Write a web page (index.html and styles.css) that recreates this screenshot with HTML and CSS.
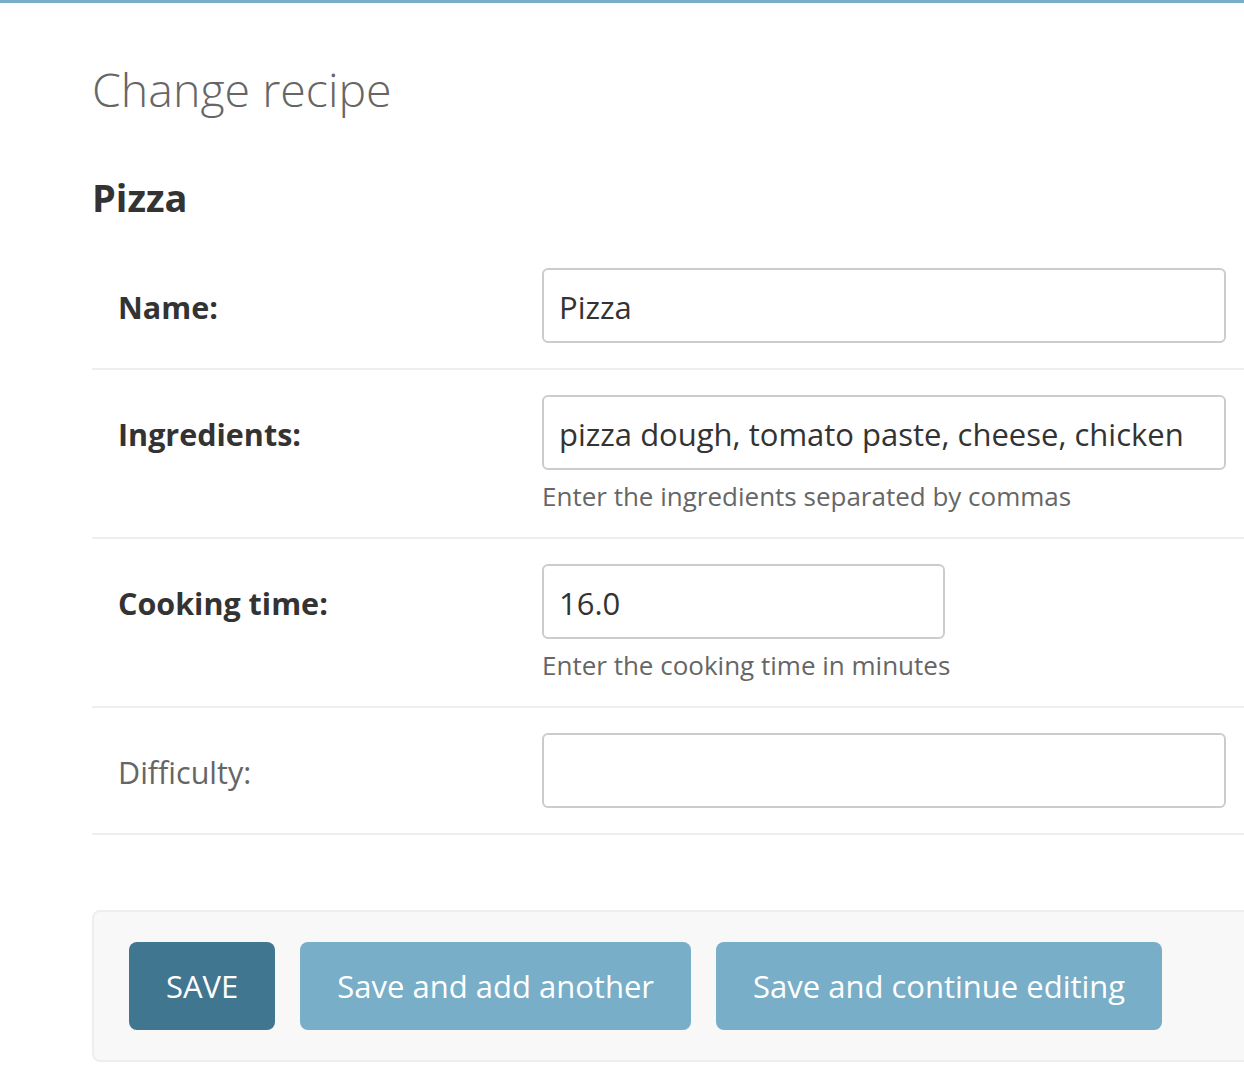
FILE: index.html
```html
<!DOCTYPE html>
<html lang="en">
<head>
<meta charset="utf-8">
<title>Change recipe</title>
<link rel="stylesheet" href="styles.css">
</head>
<body>
<div class="topbar"></div>
<main class="content">
  <h1 class="page-title">Change recipe</h1>
  <h2 class="object-title">Pizza</h2>
  <form class="change-form">
    <fieldset class="module">
      <div class="form-row">
        <label class="label required" for="id_name">Name:</label>
        <div class="field">
          <input class="text-input wide" id="id_name" type="text" value="Pizza">
        </div>
      </div>
      <div class="form-row">
        <label class="label required" for="id_ingredients">Ingredients:</label>
        <div class="field">
          <input class="text-input wide" id="id_ingredients" type="text" value="pizza dough, tomato paste, cheese, chicken">
          <div class="help">Enter the ingredients separated by commas</div>
        </div>
      </div>
      <div class="form-row">
        <label class="label required" for="id_cooking_time">Cooking time:</label>
        <div class="field">
          <input class="text-input narrow" id="id_cooking_time" type="text" value="16.0">
          <div class="help">Enter the cooking time in minutes</div>
        </div>
      </div>
      <div class="form-row">
        <label class="label optional" for="id_difficulty">Difficulty:</label>
        <div class="field">
          <input class="text-input wide" id="id_difficulty" type="text" value="">
        </div>
      </div>
    </fieldset>
    <div class="submit-row">
      <button type="button" class="btn btn-default">SAVE</button>
      <button type="button" class="btn">Save and add another</button>
      <button type="button" class="btn">Save and continue editing</button>
    </div>
  </form>
</main>
</body>
</html>
```
FILE: styles.css
```css
html, body {
  margin: 0;
  padding: 0;
  overflow: hidden;
  background: #fff;
}
body {
  font-family: "Open Sans", "Noto Sans", sans-serif;
  color: #333;
  width: 1244px;
  height: 1067px;
}
.topbar {
  height: 3px;
  background: #79aec8;
}
.content {
  padding: 59px 0 0 92px;
  width: 1300px;
}
.page-title {
  margin: 0 0 58px 0;
  font-size: 46.5px;
  line-height: 54px;
  font-weight: 300;
  color: #666;
}
.object-title {
  margin: 0 0 23px 0;
  font-size: 38px;
  line-height: 46px;
  font-weight: 700;
  color: #333;
}
.change-form {
  margin: 0;
}
.module {
  margin: 0;
  padding: 0;
  border: 0;
}
.form-row {
  display: flex;
  align-items: baseline;
  padding: 25px 0 25px 26px;
  border-bottom: 2px solid #eee;
}
.label {
  width: 424px;
  flex: none;
  font-size: 30.5px;
  line-height: 40px;
  color: #333;
}
.label.required {
  font-weight: 700;
}
.label.optional {
  font-weight: 400;
  color: #666;
}
.field {
  display: flex;
  flex-direction: column;
  align-items: flex-start;
}
.text-input {
  box-sizing: border-box;
  height: 75px;
  padding: 3px 15px 0;
  border: 2px solid #ccc;
  border-radius: 6px;
  font-family: "Open Sans", "Noto Sans", sans-serif;
  font-size: 31px;
  color: #333;
  background: #fff;
  outline: none;
}
.text-input.wide {
  width: 684px;
}
.text-input.narrow {
  width: 403px;
}
.help {
  margin-top: 10px;
  font-size: 26px;
  line-height: 32px;
  color: #666;
}
.submit-row {
  display: flex;
  gap: 25px;
  margin-top: 75px;
  padding: 30px 35px 30px;
  background: #f8f8f8;
  border: 2px solid #eee;
  border-radius: 8px;
}
.btn {
  height: 88px;
  padding: 0 37px;
  border: 0;
  border-radius: 8px;
  background: #79aec8;
  color: #fff;
  font-family: "Open Sans", "Noto Sans", sans-serif;
  font-size: 31px;
  line-height: 88px;
}
.btn-default {
  background: #417690;
}
```
